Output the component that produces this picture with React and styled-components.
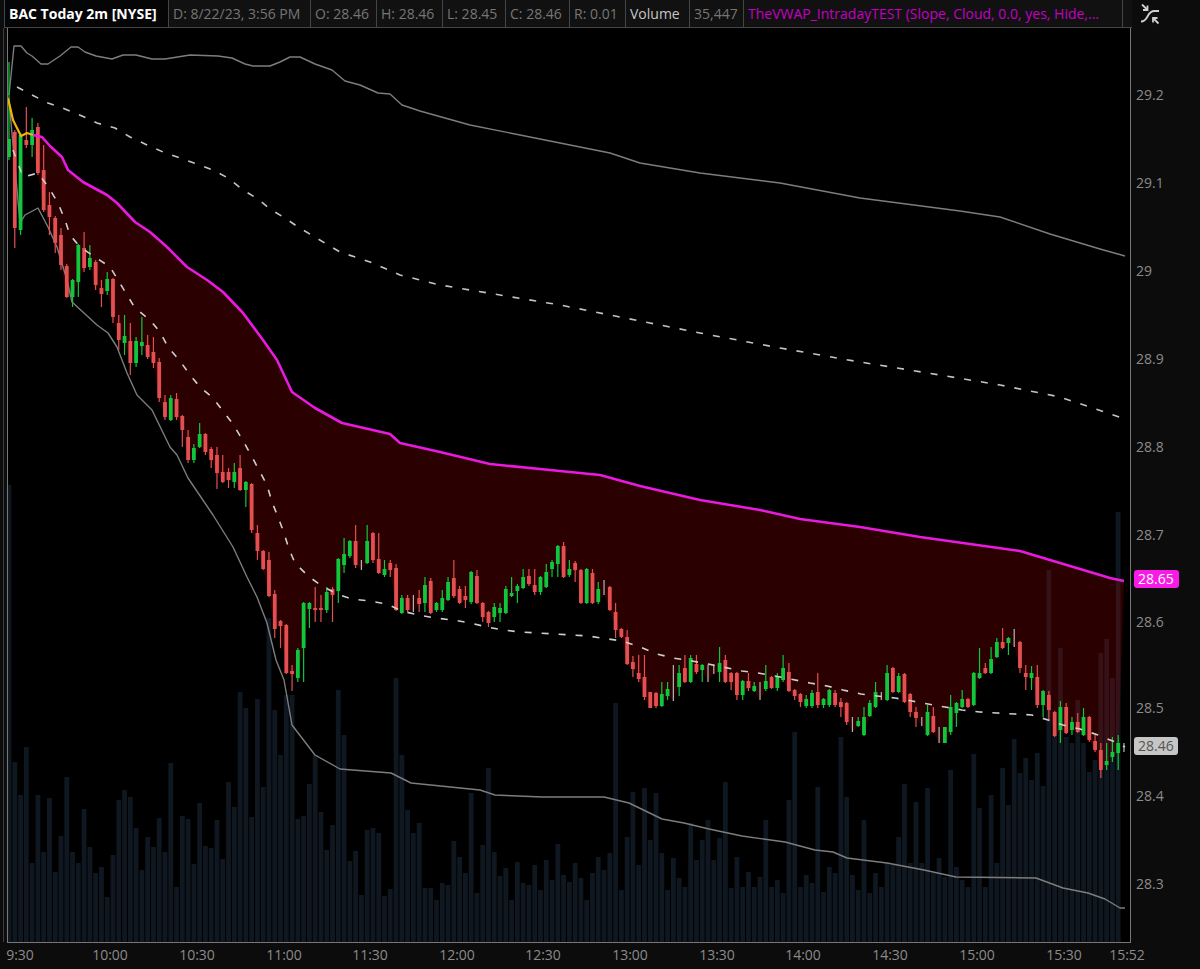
import styled, { createGlobalStyle } from "styled-components";

// [body top, body bottom, wick top, wick bottom, colour]
const candles = [
  [139,157,62,160,"g"],[132,228,130,248,"r"],[135,230,133,235,"g"],[140,145,107,148,"r"],[130,145,118,157,"g"],
  [127,173,123,175,"r"],[170,210,145,212,"r"],[205,217,192,235,"r"],[218,243,216,253,"r"],[235,265,228,270,"r"],
  [266,297,264,298,"r"],[280,297,279,307,"g"],[245,282,244,297,"g"],[248,268,232,272,"r"],[258,267,245,270,"g"],
  [262,285,260,290,"r"],[288,294,280,307,"r"],[279,291,272,295,"g"],[279,317,278,323,"r"],[323,340,315,350,"r"],
  [336,343,315,355,"g"],[341,363,323,375,"r"],[341,363,337,367,"g"],[342,346,317,355,"g"],[345,357,335,359,"r"],
  [352,363,337,368,"r"],[362,398,358,402,"r"],[402,417,395,420,"r"],[398,420,395,421,"g"],[399,417,393,420,"r"],
  [416,430,415,447,"r"],[437,460,430,463,"r"],[448,460,444,463,"g"],[434,447,423,448,"g"],[434,452,433,455,"r"],
  [449,460,447,468,"r"],[455,473,447,489,"r"],[472,482,455,483,"r"],[472,480,468,488,"r"],[472,482,463,488,"g"],
  [468,490,455,491,"r"],[482,490,481,507,"g"],[484,530,483,533,"r"],[533,551,525,560,"r"],[551,569,550,570,"r"],
  [560,596,552,597,"r"],[594,629,590,638,"r"],[621,626,620,648,"r"],[625,673,624,674,"r"],[671,674,665,691,"r"],
  [650,678,648,682,"g"],[603,648,602,682,"g"],[603,609,602,628,"g"],[608,610,587,622,"r"],[608,610,595,622,"r"],
  [592,610,587,613,"g"],[589,595,587,622,"r"],[559,591,558,603,"g"],[554,565,538,573,"g"],[541,556,540,558,"g"],
  [541,565,525,568,"r"],[562,569,560,570,"n"],[541,563,525,564,"g"],[533,560,532,563,"r"],[559,573,533,574,"r"],
  [569,575,560,577,"g"],[563,570,560,577,"r"],[568,610,564,611,"r"],[598,613,595,614,"g"],[598,610,595,612,"r"],
  [596,612,595,612,"n"],[598,604,590,612,"r"],[585,603,577,612,"g"],[581,613,578,614,"r"],[603,610,602,612,"g"],
  [598,610,590,612,"g"],[582,600,577,601,"g"],[578,596,560,598,"r"],[589,603,586,604,"r"],[596,600,586,608,"r"],
  [572,602,571,604,"g"],[576,603,570,604,"r"],[603,617,602,622,"r"],[612,623,611,627,"r"],[607,617,603,622,"g"],
  [608,613,603,622,"g"],[589,613,586,614,"g"],[593,596,577,597,"g"],[586,591,584,603,"g"],[577,588,569,589,"g"],
  [576,584,569,586,"r"],[585,592,569,595,"r"],[577,592,576,595,"g"],[572,587,564,588,"g"],[562,569,560,577,"g"],
  [546,564,545,577,"g"],[546,577,542,578,"r"],[569,575,560,577,"g"],[563,570,561,582,"r"],[570,603,569,604,"r"],
  [569,603,568,604,"g"],[573,603,569,604,"r"],[589,602,582,604,"g"],[581,595,580,595,"n"],[587,610,586,611,"r"],
  [612,630,603,638,"r"],[629,637,628,638,"r"],[637,664,630,665,"r"],[662,669,656,677,"r"],[673,679,655,682,"r"],
  [677,697,655,700,"r"],[692,708,692,708,"r"],[693,706,692,708,"r"],[694,706,682,707,"g"],[689,696,682,700,"g"],
  [687,700,665,701,"n"],[673,687,665,696,"g"],[668,682,655,683,"r"],[658,682,655,683,"g"],[664,672,655,674,"r"],
  [665,670,664,682,"g"],[665,682,665,682,"n"],[667,673,665,674,"n"],[663,672,647,682,"g"],[660,682,655,683,"r"],
  [673,682,672,690,"r"],[673,695,672,700,"r"],[681,695,680,700,"g"],[681,688,673,691,"r"],[686,691,682,692,"g"],
  [682,700,682,700,"n"],[681,689,665,691,"g"],[677,688,676,689,"r"],[677,688,673,691,"g"],[668,680,655,682,"g"],
  [672,691,663,692,"r"],[690,696,689,700,"r"],[694,702,693,707,"r"],[699,706,695,708,"g"],[693,706,690,708,"g"],
  [692,705,673,708,"r"],[699,705,698,708,"g"],[690,705,689,707,"g"],[693,705,690,707,"r"],[702,707,698,717,"r"],
  [703,722,702,725,"r"],[717,732,717,732,"n"],[721,726,717,727,"g"],[717,735,707,736,"g"],[703,716,700,717,"g"],
  [692,707,682,708,"g"],[692,700,692,700,"n"],[673,700,665,701,"g"],[668,692,667,693,"r"],[676,692,673,693,"g"],
  [674,702,673,703,"r"],[694,712,693,717,"r"],[712,718,707,727,"r"],[717,726,717,726,"n"],[712,735,705,736,"g"],
  [716,732,707,733,"r"],[727,743,727,743,"n"],[727,743,727,743,"g"],[707,732,695,735,"g"],[703,713,702,727,"g"],
  [699,707,690,708,"g"],[699,707,698,708,"r"],[673,705,672,706,"g"],[673,678,648,679,"g"],[668,673,663,674,"r"],
  [659,673,647,674,"g"],[642,657,638,658,"g"],[642,648,628,649,"r"],[638,643,637,655,"g"],[629,647,629,647,"n"],
  [642,668,641,673,"r"],[673,677,665,690,"r"],[673,678,666,690,"g"],[677,705,665,708,"r"],[691,705,690,717,"g"],
  [695,710,691,720,"r"],[712,736,711,737,"r"],[707,730,701,743,"g"],[707,733,703,734,"r"],[722,730,717,735,"g"],
  [722,732,713,733,"r"],[717,735,708,736,"g"],[717,740,716,742,"r"],[741,750,735,752,"r"],[750,770,743,778,"r"],
  [761,765,743,770,"g"],[752,757,737,762,"g"],[743,753,735,770,"g"],[743,752,743,752,"n"],
];

// top edge of each volume bar, one per candle
const volumeTops = [
  485,762,795,747,863,795,852,798,872,836,777,852,863,809,847,873,867,897,855,800,
  790,797,828,870,837,847,818,852,763,887,816,819,864,803,846,848,820,859,782,807,
  692,708,817,699,787,618,710,755,695,695,819,816,784,755,812,850,825,690,735,861,
  851,895,830,828,833,896,889,678,755,810,833,823,888,888,900,883,885,841,857,873,
  793,893,845,768,852,876,868,900,862,883,885,865,890,860,880,844,875,882,863,878,
  900,873,857,870,853,703,890,837,792,865,788,840,793,853,890,858,878,887,823,860,
  840,820,860,838,782,888,857,887,872,887,877,820,887,880,893,800,732,887,875,883,
  787,892,867,873,737,797,875,890,820,893,873,887,863,865,837,784,863,802,863,788,
  873,858,877,770,867,880,887,754,808,887,795,863,768,805,739,773,758,780,753,786,
  570,733,648,737,743,700,743,772,760,653,639,678,512,942,
];

const upperBand = "9,95 14,46 21,46 27,53 32,56 41,64 48,64 60,56 71,47 78,47 85,52 96,56 112,59 123,55 136,55 152,59 165,59 190,55 218,56 232,58 245,64 253,66 270,66 280,62 290,57 300,57 315,64 332,70 345,81 360,85 378,93 390,94 402,105 420,111 470,125 520,135 560,143 610,153 640,163 700,173 780,183 860,198 960,211 1000,217 1050,234 1100,249 1125,256";
const upperDash = "17,87 32,95 48,103 65,109 82,116 97,123 115,128 130,137 147,145 163,152 180,158 197,164 213,170 228,178 243,190 258,199 270,209 285,218 298,227 340,252 370,262 400,275 440,285 500,295 560,305 610,315 650,323 700,333 780,348 860,362 940,375 1000,385 1060,397 1125,419";
const vwap = "33,135 42,137 50,146 62,157 68,170 83,182 107,195 117,203 135,222 150,232 167,247 187,267 207,280 223,292 243,313 263,340 277,360 292,392 315,408 342,423 390,434 400,443 440,452 490,464 550,470 600,475 640,486 700,500 760,510 800,519 860,527 920,537 970,544 1020,551 1060,563 1110,578 1124,581";
const openLeg = "8,98 13,120 21,136 27,133 33,135";
const midDash = "13,150 23,177 38,173 49,188 58,203 65,220 70,235 80,247 95,257 110,267 118,280 127,295 135,308 150,320 160,332 168,347 180,361 190,375 200,387 213,398 223,411 233,424 242,439 251,455 259,470 267,485 272,502 278,517 284,533 289,549 295,563 308,576 322,586 337,594 352,599 370,601 387,604 402,611 418,615 435,618 453,620 470,623 487,627 503,630 520,632 555,634 588,636 622,641 640,647 657,654 673,658 692,661 708,664 742,671 758,673 775,676 810,683 827,686 843,690 861,694 877,696 895,698 912,701 928,704 945,707 962,710 980,712 997,713 1015,714 1032,715 1048,720 1063,725 1080,729 1098,735 1115,742 1125,747";
const lowerBand = "9,100 20,223 25,215 38,208 48,227 57,247 67,280 72,302 97,325 108,333 117,347 127,373 137,395 152,410 170,447 177,455 188,478 213,515 233,547 247,577 257,597 267,623 276,660 284,680 292,725 315,755 340,769 391,773 411,783 480,790 495,795 542,797 604,797 629,803 662,819 684,823 709,829 742,836 785,842 815,850 833,852 847,858 887,863 924,870 956,877 1036,878 1063,888 1088,893 1105,899 1120,908 1125,908";

const priceTicks = [
  ["29.2", 95], ["29.1", 183], ["29", 271], ["28.9", 359], ["28.8", 447],
  ["28.7", 535], ["28.6", 622], ["28.5", 708], ["28.4", 796], ["28.3", 884],
];

const timeTicks = [
  ["9:30", 20], ["10:00", 110], ["10:30", 197], ["11:00", 284], ["11:30", 370], ["12:00", 457],
  ["12:30", 543], ["13:00", 630], ["13:30", 717], ["14:00", 803], ["14:30", 890], ["15:00", 977],
  ["15:30", 1064], ["15:52", 1127],
];

const legendCells = [
  { w: 164, text: "BAC Today 2m [NYSE]", kind: "title" },
  { w: 142, text: "D: 8/22/23, 3:56 PM" },
  { w: 66, text: "O: 28.46" },
  { w: 66, text: "H: 28.46" },
  { w: 63, text: "L: 28.45" },
  { w: 64, text: "C: 28.46" },
  { w: 56, text: "R: 0.01" },
  { w: 64, text: "Volume", kind: "label" },
  { w: 54, text: "35,447" },
  { w: 379, text: "TheVWAP_IntradayTEST (Slope, Cloud, 0.0, yes, Hide,...", kind: "study" },
  { w: 10, text: "" },
];

const barX = (i) => 9 + 5.777 * i;
const candleColors = { g: "#10c63c", r: "#e44f52", n: "#b4b4b4" };

const cloudPoints = () => {
  const bottom = candles
    .slice(4, 193)
    .map((c, i) => `${barX(i + 4).toFixed(1)},${c[1]}`)
    .reverse()
    .join(" ");
  return `${vwap} ${bottom}`;
};

const GlobalStyle = createGlobalStyle`
  html, body {
    margin: 0;
    padding: 0;
    background: #0c0c0c;
  }
`;

const Page = styled.div`
  width: 1200px;
  height: 969px;
  overflow: hidden;
  background: #0c0c0c;
  font-family: "Open Sans", "Noto Sans", sans-serif;
`;

const TopBar = styled.header`
  display: flex;
  height: 28px;
  padding-left: 4px;
  box-sizing: border-box;
`;

const Legend = styled.div`
  display: flex;
  width: 1128px;
  height: 28px;
  box-sizing: border-box;
  border-bottom: 1px solid #454545;
  border-right: 1px solid #454545;
`;

const LegendCell = styled.div`
  flex: none;
  width: ${(p) => p.$w}px;
  box-sizing: border-box;
  padding: 0 0 0 4px;
  border-left: 1px solid #454545;
  background: ${(p) => (p.$kind === "title" ? "#050505" : "#111")};
  color: ${(p) =>
    p.$kind === "title" ? "#fff" : p.$kind === "label" ? "#c6c6c6" : p.$kind === "study" ? "#c400c4" : "#767676"};
  font-size: 14px;
  font-weight: ${(p) => (p.$kind === "title" ? 700 : 400)};
  line-height: 27px;
  white-space: nowrap;
  overflow: hidden;
`;

const ToolSlot = styled.div`
  display: flex;
  align-items: center;
  margin-left: 8px;
`;

const ChartSvg = styled.svg`
  display: block;
`;

const SeriesGroup = styled.g`
  filter: blur(0.45px);
`;

const Line = styled.polyline`
  fill: none;
  stroke: ${(p) => p.$color};
  stroke-width: ${(p) => p.$width || 1.4};
  stroke-linejoin: round;
  stroke-dasharray: ${(p) => (p.$dashed ? "7 10" : "none")};
`;

const AxisLabel = styled.text`
  fill: #8b8b8b;
  font-size: 14px;
  font-family: "Open Sans", "Noto Sans", sans-serif;
`;

const BadgeText = styled.text`
  fill: ${(p) => p.$color};
  font-size: 14px;
  font-family: "Open Sans", "Noto Sans", sans-serif;
`;

const LinkIcon = () => (
  <svg width="20" height="22" viewBox="0 0 20 22" fill="none" stroke="#cfcfcf" strokeWidth="1.8">
    <path d="M1 18.5c3.5 0 5-2 6.5-5s3.5-5.5 7-5.5H19" />
    <path d="M2 1.5l5.5 5.5M7.5 2.5V7H3" />
    <path d="M18.5 20.5L13 15M13 19.5V15h4.5" />
  </svg>
);

const Candle = ({ c, i }) => {
  const [top, bottom, high, low, kind] = c;
  const x = barX(i);
  const color = candleColors[kind];
  return (
    <g>
      <rect x={x - 0.6} y={high} width={1.2} height={low - high} fill={color} />
      {kind !== "n" && <rect x={x - 1.9} y={top} width={3.8} height={Math.max(bottom - top, 2)} fill={color} />}
    </g>
  );
};

const Chart = () => (
  <ChartSvg width="1200" height="941" viewBox="0 28 1200 941">
    <rect x="8" y="28" width="1123" height="914" fill="#000" />
    <SeriesGroup>
      {volumeTops.map((top, i) => (
        <rect key={i} x={barX(i) - 2.4} y={top} width={4.8} height={942 - top} fill="#0f1720" />
      ))}
      <polygon points={cloudPoints()} fill="#b00000" fillOpacity="0.24" />
      <Line points={upperBand} $color="#7d7d7d" />
      <Line points={lowerBand} $color="#7d7d7d" />
      {candles.map((c, i) => (
        <Candle key={i} c={c} i={i} />
      ))}
      <Line points={upperDash} $color="#c4c4c4" $width={1.6} $dashed />
      <Line points={midDash} $color="#cfcfcf" $width={1.6} $dashed />
      <Line points={openLeg} $color="#f2b20c" $width={2.2} />
      <Line points={vwap} $color="#e81ae0" $width={2.6} />
    </SeriesGroup>

    <rect x="3" y="28" width="1" height="914" fill="#3c3c3c" />
    <rect x="7" y="28" width="1" height="914" fill="#777" />
    <rect x="7" y="942" width="1124" height="1" fill="#777" />
    <rect x="1130" y="28" width="1" height="915" fill="#777" />

    {priceTicks.map(([label, y]) => (
      <AxisLabel key={label} x="1136" y={y + 5}>
        {label}
      </AxisLabel>
    ))}
    {timeTicks.map(([label, x]) => (
      <AxisLabel key={label} x={x} y="960" textAnchor="middle">
        {label}
      </AxisLabel>
    ))}

    <rect x="1134" y="570" width="45" height="18" rx="3" fill="#f81ae6" />
    <BadgeText x="1138" y="584" $color="#fff">28.65</BadgeText>
    <rect x="1134" y="737" width="44" height="18" rx="3" fill="#c6c6c6" />
    <BadgeText x="1138" y="751" $color="#555">28.46</BadgeText>
  </ChartSvg>
);

export default function App() {
  return (
    <Page>
      <GlobalStyle />
      <TopBar>
        <Legend>
          {legendCells.map((cell, i) => (
            <LegendCell key={i} $w={cell.w} $kind={cell.kind}>
              {cell.text}
            </LegendCell>
          ))}
        </Legend>
        <ToolSlot>
          <LinkIcon />
        </ToolSlot>
      </TopBar>
      <Chart />
    </Page>
  );
}
